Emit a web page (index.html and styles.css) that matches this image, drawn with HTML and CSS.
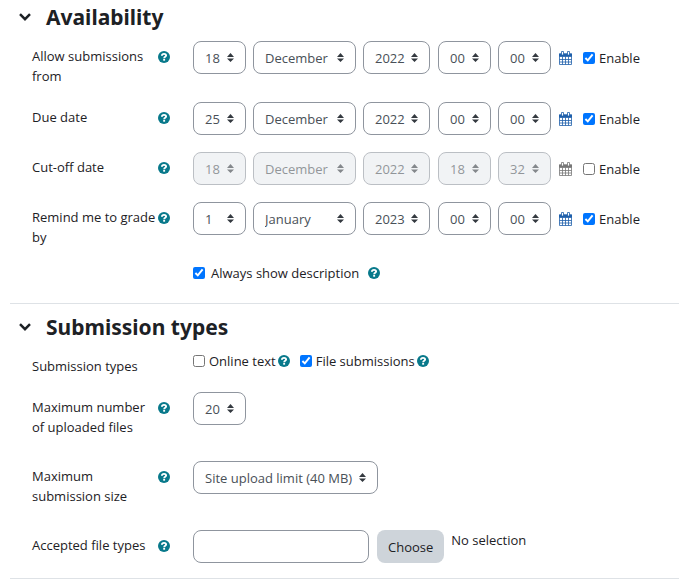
FILE: index.html
```
<!DOCTYPE html>
<html lang="en">
<head>
  <meta charset="UTF-8">
  <meta name="viewport" content="width=device-width, initial-scale=1.0">
  <title>Assignment settings</title>
  <link rel="stylesheet" href="styles.css">
</head>
<body>
  <svg class="sprite" aria-hidden="true">
    <symbol id="help" viewBox="0 0 12 12">
      <circle cx="6" cy="6" r="6" fill="currentColor"/>
      <path d="M3.900 4.700C4 3.300 4.900 2.900 6 2.900s2.100.6 2.100 1.700C8.100 5.800 6.200 5.800 6.200 7.200" fill="none" stroke="#fff" stroke-width="1.900"/>
      <path d="M5.200 7.900h1.900v1.800H5.200z" fill="#fff"/>
    </symbol>
    <symbol id="calendar" viewBox="0 0 13 14">
      <path d="M.5 3h12v10.500H.5zM.5 5.500h12M.5 8.500h12M.5 11h12M3.500 5.500v8M6.500 5.500v8M9.500 5.500v8" fill="none" stroke="currentColor" stroke-width=".8"/>
      <path d="M0 2.500h13v2.800H0z" fill="currentColor"/>
      <path d="M2.500.5h2v3.500h-2zM8.500.5h2v3.500h-2z" fill="#fff" stroke="currentColor" stroke-width=".8"/>
    </symbol>
    <symbol id="chevron" viewBox="0 0 12 8">
      <path d="M1 1.200l5 5 5-5" fill="none" stroke="currentColor" stroke-width="2.500"/>
    </symbol>
  </svg>

  <form class="settings">
    <section class="section">
      <div class="section-header">
        <button type="button" class="toggle" aria-label="Collapse Availability"><svg><use href="#chevron"/></svg></button>
        <h3>Availability</h3>
      </div>

      <div class="row">
        <label class="row-label" for="from-day">Allow submissions from</label>
        <button type="button" class="help" aria-label="Help"><svg><use href="#help"/></svg></button>
        <div class="controls">
          <select class="select short" id="from-day"><option>18</option></select>
          <select class="select month" aria-label="Month"><option>December</option></select>
          <select class="select year" aria-label="Year"><option>2022</option></select>
          <select class="select short" aria-label="Hour"><option>00</option></select>
          <select class="select short" aria-label="Minute"><option>00</option></select>
          <button type="button" class="calendar" aria-label="Calendar"><svg><use href="#calendar"/></svg></button>
          <label class="check"><input type="checkbox" checked>Enable</label>
        </div>
      </div>

      <div class="row">
        <label class="row-label" for="due-day">Due date</label>
        <button type="button" class="help" aria-label="Help"><svg><use href="#help"/></svg></button>
        <div class="controls">
          <select class="select short" id="due-day"><option>25</option></select>
          <select class="select month" aria-label="Month"><option>December</option></select>
          <select class="select year" aria-label="Year"><option>2022</option></select>
          <select class="select short" aria-label="Hour"><option>00</option></select>
          <select class="select short" aria-label="Minute"><option>00</option></select>
          <button type="button" class="calendar" aria-label="Calendar"><svg><use href="#calendar"/></svg></button>
          <label class="check"><input type="checkbox" checked>Enable</label>
        </div>
      </div>

      <div class="row">
        <label class="row-label" for="cutoff-day">Cut-off date</label>
        <button type="button" class="help" aria-label="Help"><svg><use href="#help"/></svg></button>
        <div class="controls">
          <select class="select short" id="cutoff-day" disabled><option>18</option></select>
          <select class="select month" aria-label="Month" disabled><option>December</option></select>
          <select class="select year" aria-label="Year" disabled><option>2022</option></select>
          <select class="select short" aria-label="Hour" disabled><option>18</option></select>
          <select class="select short" aria-label="Minute" disabled><option>32</option></select>
          <button type="button" class="calendar" aria-label="Calendar" disabled><svg><use href="#calendar"/></svg></button>
          <label class="check"><input type="checkbox">Enable</label>
        </div>
      </div>

      <div class="row">
        <label class="row-label" for="remind-day">Remind me to grade by</label>
        <button type="button" class="help" aria-label="Help"><svg><use href="#help"/></svg></button>
        <div class="controls">
          <select class="select short" id="remind-day"><option>1</option></select>
          <select class="select month" aria-label="Month"><option>January</option></select>
          <select class="select year" aria-label="Year"><option>2023</option></select>
          <select class="select short" aria-label="Hour"><option>00</option></select>
          <select class="select short" aria-label="Minute"><option>00</option></select>
          <button type="button" class="calendar" aria-label="Calendar"><svg><use href="#calendar"/></svg></button>
          <label class="check"><input type="checkbox" checked>Enable</label>
        </div>
      </div>

      <div class="row">
        <div class="controls description">
          <label class="check"><input type="checkbox" checked>Always show description</label>
          <button type="button" class="help" aria-label="Help"><svg><use href="#help"/></svg></button>
        </div>
      </div>
    </section>

    <section class="section types">
      <div class="section-header">
        <button type="button" class="toggle" aria-label="Collapse Submission types"><svg><use href="#chevron"/></svg></button>
        <h3>Submission types</h3>
      </div>

      <div class="row compact">
        <span class="row-label">Submission types</span>
        <div class="controls options">
          <label class="check"><input type="checkbox">Online text</label>
          <button type="button" class="help" aria-label="Help"><svg><use href="#help"/></svg></button>
          <label class="check"><input type="checkbox" checked>File submissions</label>
          <button type="button" class="help" aria-label="Help"><svg><use href="#help"/></svg></button>
        </div>
      </div>

      <div class="row">
        <label class="row-label" for="max-files">Maximum number of uploaded files</label>
        <button type="button" class="help" aria-label="Help"><svg><use href="#help"/></svg></button>
        <div class="controls">
          <select class="select short" id="max-files"><option>20</option></select>
        </div>
      </div>

      <div class="row">
        <label class="row-label" for="max-size">Maximum submission size</label>
        <button type="button" class="help" aria-label="Help"><svg><use href="#help"/></svg></button>
        <div class="controls">
          <select class="select limit" id="max-size"><option>Site upload limit (40 MB)</option></select>
        </div>
      </div>

      <div class="row">
        <label class="row-label" for="file-types">Accepted file types</label>
        <button type="button" class="help" aria-label="Help"><svg><use href="#help"/></svg></button>
        <div class="controls">
          <input type="text" class="text" id="file-types">
          <button type="button" class="choose">Choose</button>
          <span class="selection">No selection</span>
        </div>
      </div>
    </section>
  </form>
</body>
</html>
```
FILE: styles.css
```
* {
  box-sizing: border-box;
}

body {
  margin: 0;
  background-color: #fff;
  color: #1d2125;
  font-family: "Open Sans", "Noto Sans", sans-serif;
  font-size: 13px;
  line-height: 20px;
}

button, input, select {
  font: inherit;
  margin: 0;
}

.sprite {
  display: none;
}

.settings {
  padding-left: 10px;
}

.section {
  padding-bottom: 6px;
  border-bottom: 1px solid #dee2e6;
}

.section-header {
  display: flex;
  align-items: center;
  gap: 15px;
  padding: 2px 0 9px 9px;
}

.section-header h3 {
  margin: 0;
  font-family: "Noto Sans", sans-serif;
  font-size: 21px;
  line-height: 30px;
}

.toggle, .help, .calendar {
  flex: none;
  padding: 0;
  border: 0;
  background: none;
}

.toggle svg {
  display: block;
  width: 12px;
  height: 8px;
  color: #1d2125;
}

.help svg {
  display: block;
  width: 12px;
  height: 12px;
  color: #08798b;
}

.calendar svg {
  display: block;
  width: 13px;
  height: 14px;
  color: #1f60ab;
}

.calendar:disabled svg {
  color: #777;
}

.row {
  display: grid;
  grid-template-columns: 126px 12px 1fr;
  align-items: start;
  min-height: 34px;
  margin-bottom: 16px;
  padding-left: 22px;
}

.row:last-child {
  margin-bottom: 0;
}

.row-label {
  padding-top: 5px;
}

.row > .help {
  padding-top: 10px;
}

.controls {
  grid-column: 3;
  display: flex;
  align-items: center;
  gap: 7px;
  padding-left: 23px;
}

.select, .text {
  height: 33px;
  border: 1px solid #8f959e;
  border-radius: 8px;
  background-color: #fff;
  color: #495057;
}

.select {
  appearance: none;
  padding: 0 11px;
  background-image: url("data:image/svg+xml,%3Csvg xmlns='http://www.w3.org/2000/svg' viewBox='0 0 7 9'%3E%3Cpath fill='%23343a40' d='M0 4L3.500 0 7 4zM0 5.500L3.500 9 7 5.500z'/%3E%3C/svg%3E");
  background-repeat: no-repeat;
  background-position: right 11px center;
  background-size: 7px 9px;
}

.select:disabled {
  background-color: #e9ecef;
  opacity: 0.6;
}

.short {
  width: 53px;
}

.month {
  width: 103px;
}

.year {
  width: 67px;
  margin-right: 1px;
}

.limit {
  width: 185px;
}

.check {
  display: flex;
  align-items: center;
  gap: 4px;
}

.check input {
  width: 12px;
  height: 12px;
}

.calendar {
  margin: 0 4px 0 1px;
}

.description {
  gap: 9px;
}

.description .check {
  gap: 6px;
}

.types {
  padding-bottom: 15px;
}

.types .section-header {
  padding-top: 8px;
}

.types .row {
  margin-bottom: 24px;
}

.types .compact {
  min-height: 25px;
  margin-bottom: 16px;
}

.types .row:last-child {
  min-height: 33px;
  margin-bottom: 0;
}

.options {
  gap: 2px;
}

.options .help + .check {
  margin-left: 8px;
}

.text {
  width: 176px;
  padding: 0 11px;
}

.choose {
  height: 33px;
  margin-left: 1px;
  padding: 0 11px;
  border: 0;
  border-radius: 8px;
  background-color: #ced4da;
  color: #1d2125;
}

.selection {
  align-self: flex-start;
}
```
